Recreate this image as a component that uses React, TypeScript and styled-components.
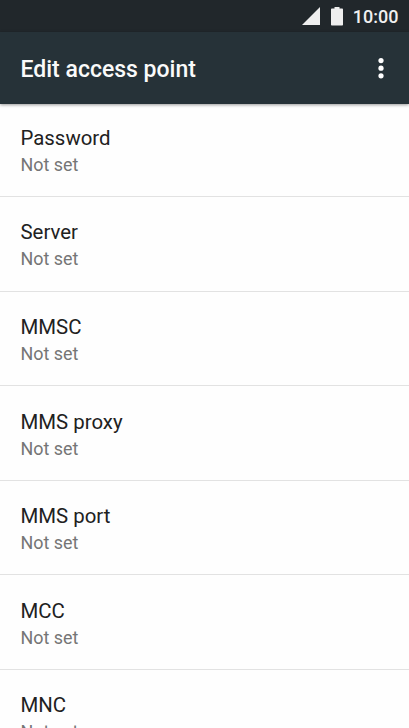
import React from "react";
import styled, { createGlobalStyle } from "styled-components";

const GlobalStyle = createGlobalStyle`
  * { box-sizing: border-box; }
  body { margin: 0; overflow: hidden; font-family: Roboto, sans-serif; }
`;

const Screen = styled.div`
  display: flex;
  flex-direction: column;
  width: 409px;
  height: 728px;
  overflow: hidden;
  background: #fefefe;
`;

const StatusBar = styled.div`
  display: flex;
  flex: none;
  align-items: center;
  justify-content: flex-end;
  height: 32px;
  padding-right: 10.5px;
  background: #21272b;
`;

const SignalIcon = styled.svg`
  width: 18px;
  height: 18px;
  margin-right: 11px;
`;

const BatteryIcon = styled.svg`
  width: 12px;
  height: 19px;
  margin-right: 9.5px;
`;

const Clock = styled.span`
  color: #f0f0f0;
  font-size: 18px;
  font-weight: 500;
  line-height: 32px;
  padding-top: 1px;
`;

const AppBar = styled.header`
  display: flex;
  flex: none;
  align-items: center;
  justify-content: space-between;
  height: 72px;
  padding: 0 20px 0 20.5px;
  background: #263238;
  box-shadow: 0 1px 3px rgba(0, 0, 0, 0.4);
  z-index: 1;
`;

const Title = styled.h1`
  margin: 0;
  padding-top: 2px;
  color: #fafafa;
  font-size: 23px;
  font-weight: 500;
`;

const MenuButton = styled.button`
  display: flex;
  justify-content: center;
  width: 16px;
  padding: 0;
  border: 0;
  background: none;
`;

const List = styled.ul`
  margin: 0;
  padding: 0;
  list-style: none;
`;

const Row = styled.li<{ $first?: boolean }>`
  height: ${(p) => (p.$first ? 93 : 94.6)}px;
  padding: ${(p) => (p.$first ? 21 : 22.49)}px 20.5px 0;
  border-bottom: 1px solid #e2e2e2;
`;

const Label = styled.div`
  color: #212121;
  font-size: 20.4px;
  line-height: 26px;
`;

const Value = styled.div`
  padding-top: 1px;
  color: #757575;
  font-size: 17.9px;
  line-height: 26px;
`;

const fields = ["Password", "Server", "MMSC", "MMS proxy", "MMS port", "MCC", "MNC"];

export default function App() {
  return (
    <Screen>
      <GlobalStyle />
      <StatusBar>
        <SignalIcon viewBox="0 0 18 18"><path d="M18 0V18H0Z" fill="#eee" /></SignalIcon>
        <BatteryIcon viewBox="0 0 12 19"><path d="M3.5 0h5v1.6h2.7q.8 0 .8.8v15.3q0 .8-.8.8H.8q-.8 0-.8-.8V2.4q0-.8.8-.8h2.7Z" fill="#eee" /></BatteryIcon>
        <Clock>10:00</Clock>
      </StatusBar>
      <AppBar>
        <Title>Edit access point</Title>
        <MenuButton aria-label="More options">
          <svg width="6" height="22" viewBox="0 0 6 22" fill="#fff">
            <circle cx="3" cy="3.6" r="2.6" />
            <circle cx="3" cy="11.2" r="2.6" />
            <circle cx="3" cy="18.8" r="2.6" />
          </svg>
        </MenuButton>
      </AppBar>
      <List>
        {fields.map((name, i) => (
          <Row key={name} $first={i === 0}>
            <Label>{name}</Label>
            <Value>Not set</Value>
          </Row>
        ))}
      </List>
    </Screen>
  );
}
